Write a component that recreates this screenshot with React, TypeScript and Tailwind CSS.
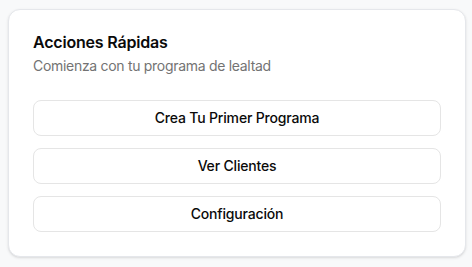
import React from "react";

export default function App() {
  const actions = ["Crea Tu Primer Programa", "Ver Clientes", "Configuración"];
  return (
    <div
      className="min-h-[267px] bg-[#f8f9fa] pl-2 pr-1.5 pt-[9px] pb-[10px]"
      style={{ fontFamily: "Inter, 'Noto Sans', sans-serif" }}
    >
      <div className="rounded-xl border border-[#e5e7eb] bg-white p-6 shadow-sm">
        <div className="flex flex-col gap-1.5">
          <h2 className="text-base font-semibold leading-4 tracking-[-0.2px] text-[#0a0a0a]">Acciones Rápidas</h2>
          <p className="text-sm leading-5 tracking-[-0.3px] text-[#737373]">Comienza con tu programa de lealtad</p>
        </div>
        <div className="mt-6 flex flex-col gap-3">
          {actions.map((a) => (
            <button
              key={a}
              className="h-9 w-full rounded-lg border border-[#e5e5e5] bg-white text-sm font-medium tracking-[-0.18px] text-[#0a0a0a]"
            >
              {a}
            </button>
          ))}
        </div>
      </div>
    </div>
  );
}
